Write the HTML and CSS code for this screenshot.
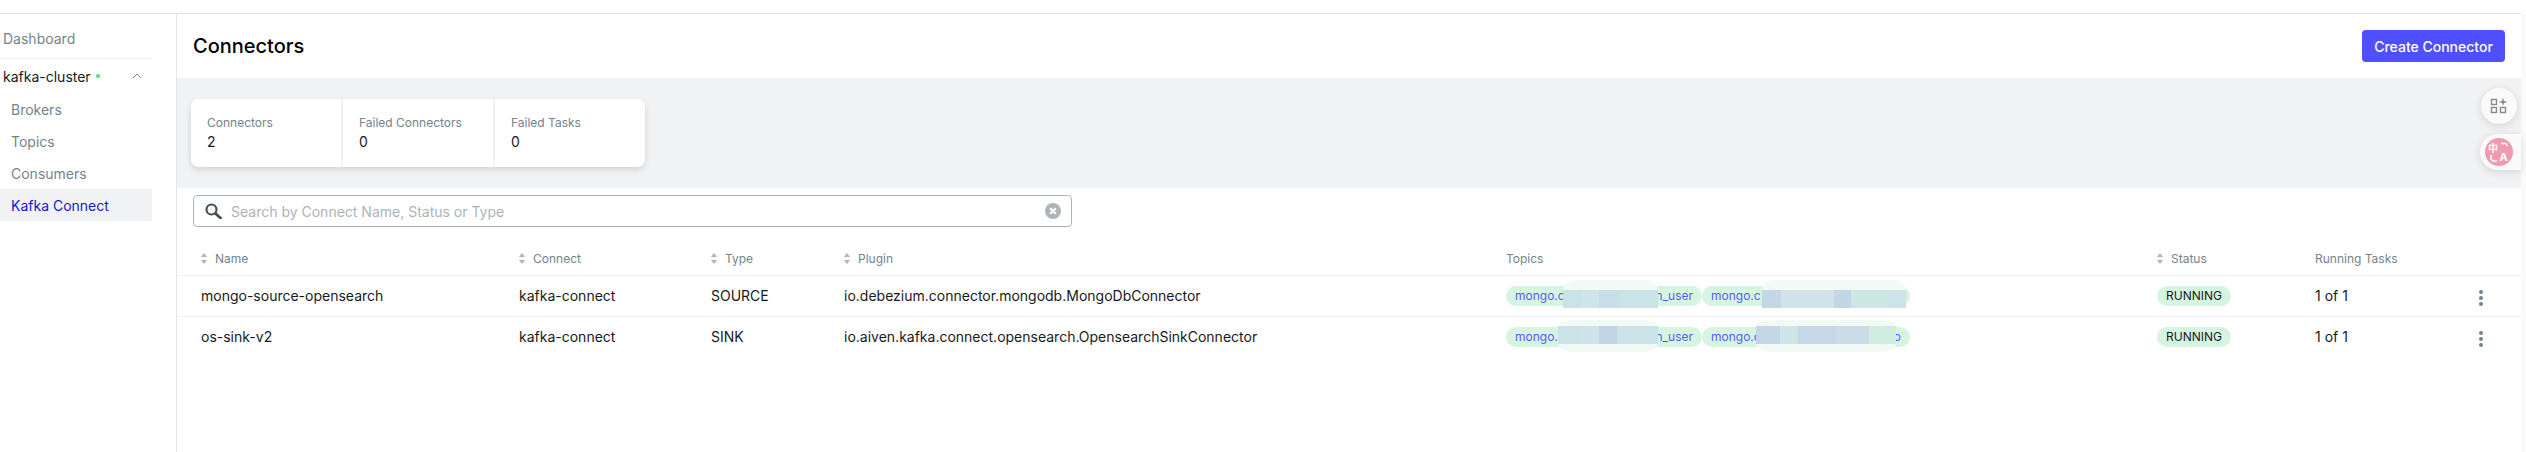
FILE: index.html
```html
<!DOCTYPE html>
<html lang="en">
<head>
    <meta charset="UTF-8">
    <meta name="viewport" content="width=device-width, initial-scale=1.0">
    <title>Connectors</title>
    <link rel="stylesheet" href="styles.css">
</head>
<body>

<div class="page">
    <div class="topbar"></div>

    <div class="layout">
        <aside class="sidebar">
            <div class="nav-list">
                <div class="nav-item nav-dashboard">Dashboard</div>
                <div class="cluster">
                    <span class="cluster-name">kafka-cluster</span>
                    <span class="cluster-dot"></span>
                    <svg class="cluster-arrow" width="10" height="6" viewBox="0 0 10 6"><path d="M1 5 L5 1 L9 5" fill="none" stroke="#73848c" stroke-width="1"/></svg>
                </div>
                <div class="nav-item nav-sub">Brokers</div>
                <div class="nav-item nav-sub">Topics</div>
                <div class="nav-item nav-sub">Consumers</div>
                <div class="nav-item nav-sub nav-active">Kafka Connect</div>
            </div>
        </aside>

        <main class="content">
            <header class="page-header">
                <h1>Connectors</h1>
                <button type="button" class="create-button">Create Connector</button>
            </header>

            <section class="metrics">
                <div class="metrics-cards">
                    <div class="metric">
                        <div class="metric-label">Connectors</div>
                        <div class="metric-value">2</div>
                    </div>
                    <div class="metric">
                        <div class="metric-label">Failed Connectors</div>
                        <div class="metric-value">0</div>
                    </div>
                    <div class="metric">
                        <div class="metric-label">Failed Tasks</div>
                        <div class="metric-value">0</div>
                    </div>
                </div>
                <button type="button" class="float-button float-apps" aria-label="Apps">
                    <svg width="18" height="18" viewBox="0 0 18 18">
                        <rect x="1.5" y="2.5" width="5" height="5" fill="none" stroke="#8a8a8a" stroke-width="1.4"/>
                        <rect x="1.5" y="10.5" width="5" height="5" fill="none" stroke="#8a8a8a" stroke-width="1.4"/>
                        <rect x="10.5" y="10.5" width="5" height="5" fill="none" stroke="#8a8a8a" stroke-width="1.4"/>
                        <path d="M13 0.5 L14 4 L17.5 5 L14 6 L13 9 L12 6 L8.5 5 L12 4 Z" fill="#8a8a8a"/>
                    </svg>
                </button>
                <div class="float-translate">
                    <div class="translate-circle">
                        <svg width="28" height="28" viewBox="0 0 28 28">
                            <text x="3" y="14" class="translate-zh">中</text>
                            <text x="14.5" y="23" class="translate-en">A</text>
                            <path d="M16 5.500 H20 Q22 5.500 22 8 M6 17 V20 Q6 23 9 23 H12" fill="none" stroke="#fff" stroke-width="1.5"/>
                        </svg>
                    </div>
                </div>
            </section>

            <section class="search-row">
                <div class="search-box">
                    <svg class="search-icon" width="17" height="16" viewBox="0 0 17 16">
                        <circle cx="6.5" cy="6.5" r="5" fill="none" stroke="#454f54" stroke-width="2.2"/>
                        <path d="M10.5 10.5 L15.5 15" stroke="#454f54" stroke-width="2.8" stroke-linecap="round"/>
                    </svg>
                    <span class="search-placeholder">Search by Connect Name, Status or Type</span>
                    <svg class="clear-icon" width="16" height="16" viewBox="0 0 16 16">
                        <circle cx="8" cy="8" r="8" fill="#abb5ba"/>
                        <path d="M5.2 5.2 L10.8 10.8 M10.8 5.2 L5.2 10.8" stroke="#fff" stroke-width="2.2"/>
                    </svg>
                </div>
            </section>

            <table class="connectors">
                <colgroup>
                    <col class="col-name"><col class="col-connect"><col class="col-type"><col class="col-plugin">
                    <col class="col-topics"><col class="col-status"><col class="col-tasks"><col class="col-menu">
                </colgroup>
                <thead>
                    <tr>
                        <th class="first"><span class="sort"></span>Name</th>
                        <th><span class="sort"></span>Connect</th>
                        <th><span class="sort"></span>Type</th>
                        <th><span class="sort"></span>Plugin</th>
                        <th>Topics</th>
                        <th><span class="sort"></span>Status</th>
                        <th>Running Tasks</th>
                        <th></th>
                    </tr>
                </thead>
                <tbody>
                    <tr>
                        <td class="first">mongo-source-opensearch</td>
                        <td>kafka-connect</td>
                        <td>SOURCE</td>
                        <td>io.debezium.connector.mongodb.MongoDbConnector</td>
                        <td>
                            <div class="topics">
                                <div class="topic topic-a"><span>mongo.c</span><span>n_user</span><i class="smudge smudge-1"></i></div>
                                <div class="topic topic-b"><span>mongo.c</span><i class="smudge smudge-2"></i></div>
                            </div>
                        </td>
                        <td><span class="status">RUNNING</span></td>
                        <td>1 of 1</td>
                        <td><span class="dots"><i></i><i></i><i></i></span></td>
                    </tr>
                    <tr>
                        <td class="first">os-sink-v2</td>
                        <td>kafka-connect</td>
                        <td>SINK</td>
                        <td>io.aiven.kafka.connect.opensearch.OpensearchSinkConnector</td>
                        <td>
                            <div class="topics">
                                <div class="topic topic-a"><span>mongo.</span><span>n_user</span><i class="smudge smudge-3"></i></div>
                                <div class="topic topic-b"><span>mongo.c</span><span>o</span><i class="smudge smudge-4"></i></div>
                            </div>
                        </td>
                        <td><span class="status">RUNNING</span></td>
                        <td>1 of 1</td>
                        <td><span class="dots"><i></i><i></i><i></i></span></td>
                    </tr>
                </tbody>
            </table>
        </main>

        <div class="scrollbar"></div>
    </div>
</div>

</body>
</html>
```

FILE: styles.css
```css
* {
    box-sizing: border-box;
}
html, body {
    margin: 0;
    height: 100%;
    overflow: hidden;
}
body {
    font-family: Inter, "Liberation Sans", sans-serif;
    font-size: 14px;
    color: #171a1c;
    background-color: #fff;
}
.page {
    height: 452px;
    display: flex;
    flex-direction: column;
}
.topbar {
    height: 14px;
    margin-right: 5px;
    border-bottom: 1px solid #e3e6e8;
}
.layout {
    flex: 1;
    display: flex;
    min-height: 0;
}

/* sidebar */
.sidebar {
    width: 177px;
    flex: none;
    padding-top: 9px;
    border-right: 1px solid #e3e6e8;
}
.nav-list {
    width: 152px;
}
.nav-item {
    height: 32px;
    line-height: 32px;
    color: #73848c;
}
.nav-dashboard {
    padding-left: 3px;
    margin-bottom: 3px;
}
.nav-sub {
    padding-left: 11px;
    line-height: 34px;
}
.nav-active {
    color: #1717cf;
    background-color: #f1f2f3;
}
.cluster {
    height: 35px;
    display: flex;
    align-items: center;
    padding: 0 10px 0 3px;
    border-top: 1px solid #f1f2f3;
}
.cluster-dot {
    width: 4px;
    height: 4px;
    margin-left: 5px;
    border-radius: 50%;
    background-color: #5cd68a;
}
.cluster-arrow {
    margin-left: auto;
}

/* header */
.content {
    flex: 1;
    min-width: 0;
}
.page-header {
    height: 64px;
    display: flex;
    align-items: center;
    justify-content: space-between;
    padding: 0 16px 0 16px;
}
.page-header h1 {
    margin: 0;
    font-size: 20px;
    font-weight: 500;
    color: #000;
}
.create-button {
    width: 143px;
    height: 32px;
    padding: 0;
    border: none;
    border-radius: 4px;
    font-family: inherit;
    font-size: 14px;
    font-weight: 500;
    color: #fff;
    background-color: #4f4fff;
}

/* metrics */
.metrics {
    position: relative;
    height: 110px;
    padding: 21px 14px;
    background-color: #f1f2f3;
}
.metrics-cards {
    width: 454px;
    display: flex;
    gap: 2px;
    border-radius: 8px;
    box-shadow: 0 3px 6px rgba(0, 0, 0, 0.12);
}
.metric {
    width: 150px;
    height: 68px;
    padding: 16px;
    background-color: #fff;
}
.metric:first-child {
    border-radius: 8px 0 0 8px;
}
.metric:last-child {
    border-radius: 0 8px 8px 0;
}
.metric-label {
    font-size: 12px;
    line-height: 16px;
    color: #73848c;
}
.metric-value {
    margin-top: 1px;
    line-height: 20px;
}

/* floating extension buttons */
.float-button {
    position: absolute;
    top: 10px;
    right: 4px;
    width: 36px;
    height: 36px;
    padding: 0;
    display: flex;
    align-items: center;
    justify-content: center;
    border: none;
    border-radius: 50%;
    background-color: #fafafa;
    box-shadow: 0 2px 8px rgba(0, 0, 0, 0.12);
}
.float-translate {
    position: absolute;
    top: 56px;
    right: 0;
    width: 41px;
    height: 36px;
    padding: 4px 0 0 5px;
    border-radius: 18px 0 0 18px;
    background-color: #fafafa;
    box-shadow: 0 2px 8px rgba(0, 0, 0, 0.12);
}
.translate-circle {
    width: 28px;
    height: 28px;
    border-radius: 50%;
    background-color: #ee9ab0;
}
.translate-zh {
    font-family: "Noto Sans CJK SC", sans-serif;
    font-size: 10px;
    font-weight: 700;
    fill: #fff;
}
.translate-en {
    font-family: Inter, sans-serif;
    font-size: 11px;
    font-weight: 700;
    fill: #fff;
}

/* search */
.search-row {
    padding: 7px 0 16px 16px;
}
.search-box {
    width: 879px;
    height: 32px;
    display: flex;
    align-items: center;
    padding: 0 11px;
    border: 1px solid #abb5ba;
    border-radius: 4px;
}
.search-icon {
    flex: none;
}
.search-placeholder {
    margin-left: 9px;
    color: #abb5ba;
}
.clear-icon {
    margin-left: auto;
    margin-right: -1px;
}

/* table */
.connectors {
    width: 2344px;
    table-layout: fixed;
    border-collapse: collapse;
}
.col-name { width: 334px; }
.col-connect { width: 192px; }
.col-type { width: 133px; }
.col-plugin { width: 662px; }
.col-topics { width: 651px; }
.col-status { width: 158px; }
.col-tasks { width: 158px; }
.col-menu { width: 56px; }
.connectors th {
    height: 32px;
    padding: 0 8px;
    font-size: 12px;
    font-weight: 400;
    text-align: left;
    color: #73848c;
    border-bottom: 1px solid #f1f2f3;
}
.connectors td {
    height: 41px;
    padding: 0 8px;
    white-space: nowrap;
    border-bottom: 1px solid #f1f2f3;
}
.connectors tbody tr:last-child td {
    border-bottom: none;
}
.connectors .first {
    padding-left: 24px;
}
.sort {
    display: inline-block;
    position: relative;
    width: 7px;
    height: 11px;
    margin-right: 7px;
    vertical-align: -1px;
}
.sort::before, .sort::after {
    content: "";
    position: absolute;
    left: 0;
    border-left: 3.5px solid transparent;
    border-right: 3.5px solid transparent;
}
.sort::before {
    top: 0;
    border-bottom: 4px solid #abb5ba;
}
.sort::after {
    bottom: 0;
    border-top: 4px solid #abb5ba;
}

/* topic chips */
.topics {
    display: flex;
}
.topic {
    position: relative;
    height: 20px;
    display: flex;
    justify-content: space-between;
    padding: 0 9px;
    border-radius: 10px;
    font-size: 12px;
    line-height: 20px;
    color: #5b5bff;
    background-color: #d6f5e0;
}
.topic-a {
    width: 196px;
}
.topic-b {
    width: 208px;
}

/* blurred-out parts of the topic names, mosaic strip on a pale halo */
.smudge {
    position: absolute;
    background-color: #f2faf5;
    background-repeat: no-repeat;
}
.smudge-1, .smudge-2 {
    top: -6px;
    height: 28px;
    background-size: 100% 18px;
    background-position: 0 10px;
    border-radius: 16px 16px 0 0 / 10px 10px 0 0;
}
.smudge-3, .smudge-4 {
    top: -7px;
    height: 32px;
    background-size: 100% 18px;
    background-position: 0 6px;
    border-radius: 16px / 6px 6px 8px 8px;
}
.smudge-1 {
    left: 57px;
    width: 95px;
    background-image: linear-gradient(90deg, #c9e3e6 0 19%, #cfe5ea 19% 38%, #c9dfe8 38% 58%, #c9e3e6 58%);
}
.smudge-2 {
    left: 60px;
    width: 144px;
    background-image: linear-gradient(90deg, #c5d7e6 0 13%, #cfe3e8 13% 50%, #c2d6e8 50% 62%, #cde8e4 62% 87%, #cfe3ea 87%);
}
.smudge-3 {
    left: 52px;
    width: 100px;
    background-image: linear-gradient(90deg, #c9e3e6 0 24%, #cde3e8 24% 41%, #c2d4e8 41% 59%, #c9e3e6 59%);
}
.smudge-4 {
    left: 54px;
    width: 140px;
    background-image: linear-gradient(90deg, #c5d7e6 0 17%, #cfe6e8 17% 30%, #c6d8e8 30% 57%, #c9dce8 57% 81%, #d0ede2 81%);
}

.status {
    display: inline-block;
    width: 74px;
    height: 20px;
    border-radius: 10px;
    font-size: 12px;
    line-height: 20px;
    text-align: center;
    vertical-align: middle;
    background-color: #d6f5e0;
}
.dots {
    display: inline-flex;
    flex-direction: column;
    gap: 2px;
    margin-left: 6px;
    vertical-align: 6px;
}
.dots i {
    width: 4px;
    height: 4px;
    border-radius: 50%;
    background-color: #73848c;
}

.scrollbar {
    width: 5px;
    flex: none;
    background-color: #fafafa;
}
```
